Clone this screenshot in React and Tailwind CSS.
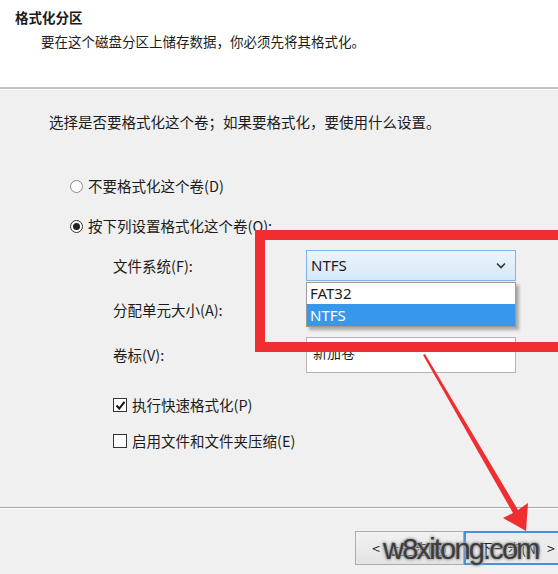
import React from 'react';

const FONT = "font-['Microsoft_YaHei','Noto_Sans_CJK_SC',sans-serif]";

function Radio({ checked, label }) {
  return (
    <div className="flex items-center h-[20px] pl-[70px] gap-[5px]">
      <span
        className={`w-[13px] h-[13px] rounded-full border bg-white flex items-center justify-center ${
          checked ? 'border-[#333]' : 'border-[#8a8a8a]'
        }`}
      >
        {checked && <span className="w-[7px] h-[7px] rounded-full bg-[#222]" />}
      </span>
      <span>{label}</span>
    </div>
  );
}

function Checkbox({ checked, label }) {
  return (
    <div className="flex items-center h-[20px] pl-[113px] gap-[5px]">
      <span className="w-[14px] h-[14px] border border-[#333] bg-white flex items-center justify-center">
        {checked && (
          <svg width="11" height="11" viewBox="0 0 11 11">
            <path d="M1.5 5.5 L4.3 8.5 L9.5 1.8" fill="none" stroke="#111" strokeWidth="2" />
          </svg>
        )}
      </span>
      <span>{label}</span>
    </div>
  );
}

function FormRow({ label, height, children }) {
  return (
    <div className="flex items-center pl-[113px]" style={{ height }}>
      <span className="w-[193px]">{label}</span>
      {children}
    </div>
  );
}

export default function App() {
  return (
    <div className={`relative w-[558px] h-[574px] overflow-hidden bg-[#f0f0f0] text-[#1b1b1b] ${FONT}`}>
      {/* header */}
      <div className="h-[89px] bg-white pl-[15px] pt-[7px] border-b-2 border-[#c2c2c2]">
        <p className="text-[13.5px] font-bold leading-[20px]">格式化分区</p>
        <p className="text-[13.5px] leading-[20px] mt-[4px] pl-[26px]">要在这个磁盘分区上储存数据，你必须先将其格式化。</p>
      </div>
      <div className="h-px bg-white" />

      {/* body */}
      <div className="text-[14.5px]">
        <p className="pl-[49px] pt-[22px] leading-[20px]">选择是否要格式化这个卷；如果要格式化，要使用什么设置。</p>

        <div className="mt-[44px]">
          <Radio label="不要格式化这个卷(D)" />
        </div>
        <div className="mt-[20px]">
          <Radio checked label="按下列设置格式化这个卷(O):" />
        </div>

        <div className="mt-[14px]">
          <FormRow label="文件系统(F):" height={31}>
            <div className="w-[210px] h-[31px] border border-[#7eb4ea] bg-gradient-to-b from-[#ecf4fc] to-[#d6e8f8] flex items-center justify-between pl-[4px] pr-[9px]">
              <span className="font-['Noto_Sans',sans-serif] text-[15px]">NTFS</span>
              <svg width="10" height="7" viewBox="0 0 10 7">
                <path d="M1 1.5 L5 5.5 L9 1.5" fill="none" stroke="#333" strokeWidth="1.6" />
              </svg>
            </div>
          </FormRow>
        </div>
        <div className="mt-[14px]">
          <FormRow label="分配单元大小(A):" height={30}>
            <div className="w-[210px] h-[30px] border border-[#acacac] bg-[#e8e8e8]" />
          </FormRow>
        </div>
        <div className="mt-[12px]">
          <FormRow label="卷标(V):" height={36}>
            <div className="w-[210px] h-[36px] border border-[#b4b4b4] bg-white pl-[6px] flex items-start pt-[4px]">
              <span className="text-[14px] leading-[20px]">新加卷</span>
            </div>
          </FormRow>
        </div>

        <div className="mt-[22px]">
          <Checkbox checked label="执行快速格式化(P)" />
        </div>
        <div className="mt-[16px]">
          <Checkbox label="启用文件和文件夹压缩(E)" />
        </div>
      </div>

      {/* footer */}
      <div className="mt-[56px] border-t border-[#a8a8a8]" />
      <div className="h-px bg-white" />
      <div className="flex pl-[355px] mt-[22px] text-[14px]">
        <div className="w-[109px] h-[34px] shrink-0 border border-[#adadad] bg-gradient-to-b from-[#f2f2f2] to-[#e3e3e3] flex items-center justify-center gap-[6px]">
          <span>&lt;</span>
          <span className="underline">上一步(B)</span>
        </div>
        <div className="w-[106px] h-[34px] shrink-0 border-2 border-[#4a90d9] bg-[#ececec] flex items-center justify-center gap-[6px]">
          <span>下一步(N)</span>
          <span>&gt;</span>
        </div>
      </div>

      {/* dropdown list (open) */}
      <div className="absolute left-[306px] top-[282px] w-[210px] border border-[#9a9a9a] bg-white shadow-[3px_3px_3px_rgba(0,0,0,0.3)] font-['Noto_Sans',sans-serif] text-[15px]">
        <div className="h-[21px] leading-[21px] pl-[3px]">FAT32</div>
        <div className="h-[22px] leading-[22px] pl-[3px] bg-[#3797ea] text-white">NTFS</div>
      </div>

      {/* red highlight rectangle */}
      <div className="absolute left-[255px] top-[230px] w-[330px] h-[122px] border-[10px] border-[#f02d30]" />

      {/* red arrow */}
      <svg className="absolute left-0 top-0" width="558" height="574" viewBox="0 0 558 574">
        <polygon points="423,355 425,354 518,510 528,503 526,531 503,518 513,513" fill="#ef2e31" />
      </svg>

      {/* watermark */}
      <div className="absolute left-[383px] top-[528px] font-['Liberation_Sans',sans-serif] text-[29px] tracking-[-1.8px] text-[#3c3c3c] [text-shadow:0_0_2px_#999,0_0_2px_#999,0_0_3px_#aaa,0_0_4px_#bbb]">
        w8xitong.com
      </div>
    </div>
  );
}
